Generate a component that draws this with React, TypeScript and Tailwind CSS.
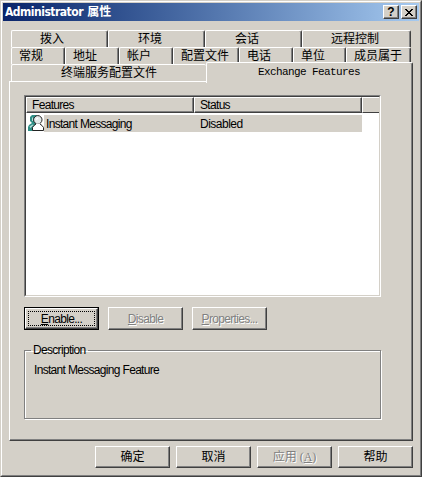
import React from "react";

const raised =
    "border border-t-white border-l-white border-r-[#404040] border-b-[#404040] shadow-[inset_-1px_-1px_0_#808080]";

interface TabProps {
    label: string;
    size: string;
    flat?: boolean;
}

function Tab({ label, size, flat }: TabProps) {
    return (
        <div
            className={
                "h-full shrink-0 rounded-t-[2px] border-t border-l border-t-white border-l-white whitespace-nowrap " +
                (flat ? "leading-[17px] " : "leading-[16px] border-r border-r-[#404040] shadow-[inset_-1px_0_0_#808080] ") +
                size
            }
        >
            {label}
        </div>
    );
}

interface ButtonProps {
    children: React.ReactNode;
    disabled?: boolean;
    focused?: boolean;
    tall?: boolean;
}

function Button({ children, disabled, focused, tall }: ButtonProps) {
    return (
        <button
            className={
                "w-[75px] flex items-center justify-center whitespace-nowrap " +
                (tall ? "h-[23px] " : "h-[22px] ") +
                (disabled ? "text-[#808080] [text-shadow:1px_1px_0_#fff] " : "text-black ") +
                (focused ? "border border-black" : raised)
            }
        >
            {focused ? (
                <span className={"w-full h-full p-[2px] " + raised}>
                    <span className="flex h-full items-center justify-center border border-dotted border-black">
                        {children}
                    </span>
                </span>
            ) : (
                children
            )}
        </button>
    );
}

function PeopleIcon() {
    return (
        <svg width="16" height="17" viewBox="0 0 16 17" className="shrink-0">
            <path d="M2 2l2-2h5v9l-4 7H0v-4l1-2 3-2-2-2z" fill="#2f8f86" />
            <path d="M1.5 11.5l3-2 1 .5-3 3zM4 3l1-1v4H4z" fill="#b5dcd8" />
            <path d="M4.5 15.5v-3l1.5-2 2-1.5h4l2 1.5 1.5 2v3z" fill="#fff" stroke="#222" />
            <circle cx="9.8" cy="4.8" r="4.2" fill="#e4eaea" stroke="#222" />
            <path d="M8 8.5h4v2H8z" fill="#fff" />
            <path d="M8 4.5L10 3" stroke="#fff" strokeWidth="1.5" />
        </svg>
    );
}

const latin = "font-['Liberation_Sans','Noto_Sans_CJK_SC',sans-serif] text-[12px] tracking-[-0.68px]";

export default function App() {
    return (
        <div className="w-[422px] h-[477px] overflow-hidden bg-[#d4d0c8] text-black text-[12px] font-['Liberation_Sans','Noto_Sans_CJK_SC',sans-serif] border border-t-[#d4d0c8] border-l-[#d4d0c8] border-r-[#404040] border-b-[#404040]">
            <div className="h-full border border-t-white border-l-white border-r-[#808080] border-b-[#808080] p-px">
                <div className="h-[18px] flex items-center pl-[2px] pr-[2px] bg-linear-to-r from-[#0a246a] to-[#a6caf0]">
                    <span className="flex-1 text-white font-bold text-[12px] tracking-[-0.5px] whitespace-nowrap font-['DejaVu_Sans_Condensed','Noto_Sans_CJK_SC',sans-serif]">
                        Administrator <span className="ml-px text-[12px] tracking-normal">属性</span>
                    </span>
                    <div className={"w-[16px] h-[14px] bg-[#d4d0c8] flex items-center justify-center text-[12px] font-bold " + raised}>
                        ?
                    </div>
                    <div className={"ml-[2px] w-[16px] h-[14px] bg-[#d4d0c8] flex items-center justify-center " + raised}>
                        <svg width="8" height="7" viewBox="0 0 8 7" shapeRendering="crispEdges">
                            <path d="M0 0h2v1h1v1h2V1h1V0h2v1H7v1H6v1H5v1h1v1h1v1h1v1H6V6H5V5H3v1H2v1H0V6h1V5h1V4h1V3H2V2H1V1H0z" />
                        </svg>
                    </div>
                </div>

                <div className="mt-[9px] ml-[8px] w-[402px]">
                    <div className="flex h-[17px]">
                        <Tab label="拨入" size="w-[97px] pl-[28px]" />
                        <Tab label="环境" size="w-[97px] pl-[29px]" />
                        <Tab label="会话" size="w-[97px] pl-[29px]" />
                        <Tab label="远程控制" size="w-[109px] pl-[28px]" />
                    </div>
                    <div className="flex h-[17px]">
                        <Tab label="常规" size="w-[54px] pl-[7px]" />
                        <Tab label="地址" size="w-[54px] pl-[7px]" />
                        <Tab label="帐户" size="w-[54px] pl-[7px]" />
                        <Tab label="配置文件" size="w-[66px] pl-[7px]" />
                        <Tab label="电话" size="w-[54px] pl-[7px]" />
                        <Tab label="单位" size="w-[53px] pl-[7px]" />
                        <Tab label="成员属于" size="w-[65px] pl-[7px]" />
                    </div>
                    <div className="flex h-[17px]">
                        <Tab flat label="终端服务配置文件" size="w-[195px] pl-[49px]" />
                        <div className="relative z-10 -mt-[2px] h-[21px] w-[207px] shrink-0 bg-[#d4d0c8] rounded-t-[2px] border-t border-l border-r border-t-white border-l-white border-r-[#404040] shadow-[inset_-1px_0_0_#808080] pl-[51px] pt-px text-[11px] tracking-[-0.6px] leading-[16px] font-['Liberation_Mono',monospace] whitespace-nowrap">
                            Exchange Features
                        </div>
                    </div>
                </div>

                <div className={"ml-[6px] w-[404px] h-[360px] pt-[13px] pl-[14px] " + raised + " " + latin}>
                    <div className="w-[357px] h-[202px] bg-white border border-t-[#808080] border-l-[#808080] border-r-white border-b-white">
                        <div className="h-full border border-t-[#404040] border-l-[#404040] border-r-[#d4d0c8] border-b-[#d4d0c8]">
                            <div className="flex h-[16px] bg-[#d4d0c8] leading-[15px]">
                                <div className={"w-[168px] pl-[5px] " + raised}>Features</div>
                                <div className={"w-[168px] pl-[5px] " + raised}>Status</div>
                                <div className="flex-1 border-t border-l border-white border-b border-b-[#404040]" />
                            </div>
                            <div className="flex h-[17px] mt-[2px] pl-[2px] leading-[18px]">
                                <PeopleIcon />
                                <div className="w-[152px] pl-[2px] bg-[#d4d0c8]">Instant Messaging</div>
                                <div className="w-[166px] pl-[4px] tracking-[-0.5px] bg-[#d4d0c8]">Disabled</div>
                            </div>
                        </div>
                    </div>

                    <div className="flex gap-[9px] mt-[10px]">
                        <Button focused tall><u>E</u>nable...</Button>
                        <Button disabled tall><u>D</u>isable</Button>
                        <Button disabled tall><u>P</u>roperties...</Button>
                    </div>

                    <fieldset className="mt-[12px] w-[357px] h-[77px] border border-[#808080] shadow-[1px_1px_0_#fff,inset_1px_1px_0_#fff] pl-[9px]">
                        <legend className="-ml-[3px] px-[2px] leading-[16px]">Description</legend>
                        <div className="mt-[4px] leading-[16px]">Instant Messaging Feature</div>
                    </fieldset>
                </div>

                <div className="flex gap-[6px] mt-[5px] ml-[92px]">
                    <Button>确定</Button>
                    <Button>取消</Button>
                    <Button disabled>应用<span className="font-['Liberation_Serif',serif] ml-[3px]">(<u>A</u>)</span></Button>
                    <Button>帮助</Button>
                </div>
            </div>
        </div>
    );
}
